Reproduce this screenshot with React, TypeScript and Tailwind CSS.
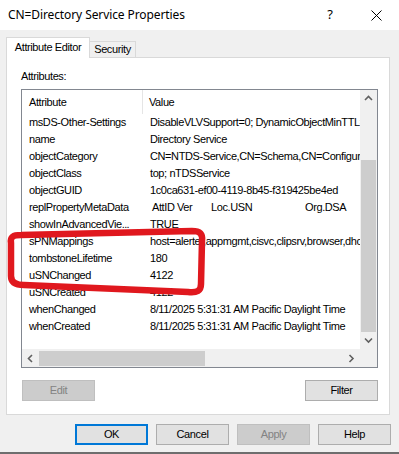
import React from "react";

type Row = { name: React.ReactNode; key: string; value: React.ReactNode };

const rows: Row[] = [
  { key: "a", name: "msDS-Other-Settings", value: "DisableVLVSupport=0; DynamicObjectMinTTL=900; DynamicObjectDefaultTTL=86400" },
  { key: "b", name: "name", value: "Directory Service" },
  { key: "c", name: "objectCategory", value: "CN=NTDS-Service,CN=Schema,CN=Configuration,DC=corp" },
  { key: "d", name: "objectClass", value: "top; nTDSService" },
  { key: "e", name: "objectGUID", value: "1c0ca631-ef00-4119-8b45-f319425be4ed" },
  {
    key: "f",
    name: "replPropertyMetaData",
    value: (
      <span className="flex">
        <span className="w-[2px] shrink-0" />
        <span className="w-[25px] shrink-0">AttID</span>
        <span className="w-[34px] shrink-0">Ver</span>
        <span className="w-[94px] shrink-0">Loc.USN</span>
        <span className="shrink-0">Org.DSA</span>
      </span>
    ),
  },
  {
    key: "g",
    name: (
      <>
        showInAdvancedVie<span className="tracking-[-0.6px]">...</span>
      </>
    ),
    value: "TRUE",
  },
  { key: "h", name: "sPNMappings", value: "host=alerter,appmgmt,cisvc,clipsrv,browser,dhcp,dnscache" },
  { key: "i", name: "tombstoneLifetime", value: "180" },
  { key: "j", name: "uSNChanged", value: "4122" },
  { key: "k", name: "uSNCreated", value: "4122" },
  { key: "l", name: "whenChanged", value: "8/11/2025 5:31:31 AM Pacific Daylight Time" },
  { key: "m", name: "whenCreated", value: "8/11/2025 5:31:31 AM Pacific Daylight Time" },
];

function Chevron({ dir }: { dir: "up" | "down" | "left" | "right" }) {
  const d = {
    up: "M1 5 L4.5 1.5 L8 5",
    down: "M1 1.5 L4.5 5 L8 1.5",
    left: "M5 1 L1.5 4.5 L5 8",
    right: "M1.5 1 L5 4.5 L1.5 8",
  }[dir];
  const horiz = dir === "left" || dir === "right";
  return (
    <svg width={horiz ? 7 : 9} height={horiz ? 9 : 7} viewBox={horiz ? "0 0 7 9" : "0 0 9 7"}>
      <path d={d} fill="none" stroke="#606060" strokeWidth="1.6" />
    </svg>
  );
}

function Btn({ label, disabled, primary }: { label: string; disabled?: boolean; primary?: boolean }) {
  return (
    <div
      className={
        "w-[73px] h-[21px] flex items-center justify-center " +
        (disabled
          ? "bg-[#cccccc] border border-[#bfbfbf] text-[#838383]"
          : primary
          ? "bg-[#e1e1e1] border-2 border-[#0078d7]"
          : "bg-[#e1e1e1] border border-[#adadad]")
      }
    >
      {label}
    </div>
  );
}

export default function App() {
  return (
    <div className="relative w-[399px] h-[454px] overflow-hidden bg-[#f0f0f0] flex flex-col font-['Liberation_Sans',Arial,sans-serif] text-[11px] tracking-[-0.4px] text-black">
      {/* title bar */}
      <div className="h-[30px] bg-white flex items-center shrink-0">
        <span className="ml-[8px] font-['Noto_Sans',sans-serif] text-[12px] tracking-[-0.1px]">
          CN=Directory Service Properties
        </span>
        <div className="ml-auto flex">
          <div className="w-[46px] h-[30px] flex items-center justify-center font-['Noto_Sans',sans-serif] text-[13px] tracking-normal">?</div>
          <div className="w-[46px] h-[30px] flex items-center justify-center">
            <svg width="11" height="11" viewBox="0 0 11 11">
              <path d="M0.5 0.5 L10.5 10.5 M10.5 0.5 L0.5 10.5" stroke="#000" strokeWidth="1" />
            </svg>
          </div>
        </div>
      </div>

      <div className="pl-[6px] pt-[7px]">
        {/* tabs */}
        <div className="flex items-end h-[20px]">
          <div className="relative z-10 -mb-px w-[84px] h-[21px] bg-white border-x border-t border-[#d9d9d9] flex items-center justify-center pb-[1px]">
            Attribute Editor
          </div>
          <div className="w-[46px] h-[16px] border-t border-r border-[#d9d9d9] flex items-center justify-center">
            Security
          </div>
        </div>

        {/* panel */}
        <div className="w-[384px] h-[358px] bg-white border border-[#d9d9d9] flex flex-col">
          <div className="ml-[14px] mt-[11px] h-[14px] leading-[14px]">Attributes:</div>

          {/* list view */}
          <div className="ml-[14px] mt-[6px] w-[357px] h-[279px] border border-[#828790] flex flex-col">
            <div className="flex h-[259px]">
              <div className="flex-1 overflow-hidden">
                <div className="flex h-[24px] items-center">
                  <div className="w-[121px] h-full pl-[7px] flex items-center border-r border-[#e5e5e5] shrink-0">Attribute</div>
                  <div className="pl-[6px]">Value</div>
                </div>
                {rows.map((r) => (
                  <div key={r.key} className="flex h-[17px] items-center">
                    <div className="w-[121px] pl-[7px] overflow-hidden whitespace-nowrap shrink-0">{r.name}</div>
                    <div className="pl-[7px] whitespace-nowrap">{r.value}</div>
                  </div>
                ))}
              </div>
              <div className="w-[17px] bg-[#f0f0f0] flex flex-col items-center">
                <div className="h-[17px] flex items-center justify-center">
                  <Chevron dir="up" />
                </div>
                <div className="w-full h-[53px]" />
                <div className="w-[15px] h-[172px] bg-[#cdcdcd]" />
                <div className="h-[17px] flex items-center justify-center">
                  <Chevron dir="down" />
                </div>
              </div>
            </div>
            <div className="flex h-[18px] bg-[#f0f0f0] items-center">
              <div className="w-[17px] flex justify-center">
                <Chevron dir="left" />
              </div>
              <div className="w-[166px] h-[15px] bg-[#cdcdcd]" />
              <div className="flex-1" />
              <div className="w-[17px] flex justify-center">
                <Chevron dir="right" />
              </div>
              <div className="w-[17px]" />
            </div>
          </div>

          <div className="ml-[15px] mt-[12px] w-[356px] flex justify-between">
            <Btn label="Edit" disabled />
            <Btn label="Filter" />
          </div>
        </div>
      </div>

      {/* dialog buttons */}
      <div className="mt-[9px] ml-[75px] flex gap-[8px]">
        <Btn label="OK" primary />
        <Btn label="Cancel" />
        <Btn label="Apply" disabled />
        <Btn label="Help" />
      </div>

      <div className="mt-auto h-[2px] bg-[#6e6e6e]" />

      {/* red hand-drawn annotation */}
      <svg className="absolute left-0 top-0 pointer-events-none" width="399" height="454" viewBox="0 0 399 454">
        <path
          d="M11 243 C10 237 13 235 21 235 L192 231 C200 231 203 234 202 241 L201 284 C201 291 197 293 188 292 L24 285 C15 285 11 282 11 276 Z"
          fill="none"
          stroke="#e0181e"
          strokeWidth="6.5"
          strokeLinejoin="round"
        />
      </svg>
    </div>
  );
}
